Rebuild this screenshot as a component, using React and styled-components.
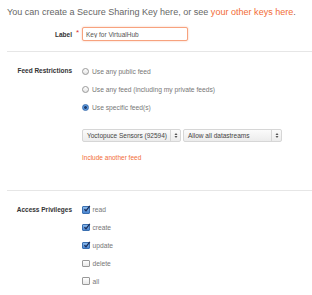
import React from "react";
import styled, { createGlobalStyle, css } from "styled-components";

const GlobalStyle = createGlobalStyle`
  body {
    margin: 0;
    background: #fff;
    font-family: "Liberation Sans", Arial, sans-serif;
    color: #555;
  }
`;

const feeds = [
  { text: "Use any public feed", checked: false },
  { text: "Use any feed (including my private feeds)", checked: false },
  { text: "Use specific feed(s)", checked: true },
];

const privileges = [
  { text: "read", checked: true },
  { text: "create", checked: true },
  { text: "update", checked: true },
  { text: "delete", checked: false },
  { text: "all", checked: false },
];

const App = () => (
  <Page>
    <GlobalStyle />
    <Intro>
      You can create a Secure Sharing Key here, or see{" "}
      <Link href="#">your other keys here</Link>.
    </Intro>

    <Row gapTop="3px">
      <FieldLabel>
        Label<Required>*</Required>
      </FieldLabel>
      <Controls>
        <TextInput defaultValue="Key for VirtualHub" />
      </Controls>
    </Row>

    <Divider />

    <Section pad="10px 0 0">
      <Row align="start">
        <FieldLabel top>Feed Restrictions</FieldLabel>
        <Controls>
          {feeds.map((f) => (
            <Option key={f.text}>
              <Radio checked={f.checked} />
              {f.text}
            </Option>
          ))}
          <SelectRow>
            <Select>
              Yoctopuce Sensors (92594)
              <Arrows />
            </Select>
            <Select>
              Allow all datastreams
              <Arrows />
            </Select>
          </SelectRow>
          <AddLink href="#">Include another feed</AddLink>
        </Controls>
      </Row>
    </Section>

    <Divider spaced />

    <Section pad="10px 0 0">
      <Row align="start">
        <FieldLabel top>Access Privileges</FieldLabel>
        <Controls>
          {privileges.map((p) => (
            <Option key={p.text} tight>
              <Checkbox checked={p.checked}>
                {p.checked && (
                  <svg width="8" height="8" viewBox="0 0 8 8">
                    <path
                      d="M1.4 4.2 L3 5.8 L6.8 0.8"
                      fill="none"
                      stroke="#1b2f5a"
                      strokeWidth="1.3"
                    />
                  </svg>
                )}
              </Checkbox>
              {p.text}
            </Option>
          ))}
        </Controls>
      </Row>
    </Section>
  </Page>
);

const Arrows = () => (
  <ArrowBox>
    <svg width="4" height="7" viewBox="0 0 4 7">
      <path d="M0.5 3 L2 1 L3.5 3 Z M0.5 4 L2 6 L3.5 4 Z" fill="#555" />
    </svg>
  </ArrowBox>
);

const Page = styled.div`
  width: 312px;
  height: 295px;
  overflow: hidden;
  padding-left: 7px;
  box-sizing: border-box;
`;

const Intro = styled.p`
  margin: 0;
  height: 24px;
  line-height: 24px;
  font-size: 9.05px;
  color: #666;
  white-space: nowrap;
`;

const Link = styled.a`
  color: #f26c35;
  text-decoration: none;
`;

const Row = styled.div`
  display: grid;
  grid-template-columns: 65px 1fr;
  column-gap: 10px;
  align-items: ${({ align }) => align || "center"};
  margin-top: ${({ gapTop }) => gapTop || "0"};
`;

const Section = styled.div`
  padding: ${({ pad }) => pad};
`;

const FieldLabel = styled.label`
  text-align: right;
  font-size: 6.5px;
  font-weight: bold;
  color: #333;
  position: relative;
  ${({ top }) =>
    top &&
    css`
      line-height: 18px;
    `}
`;

const Required = styled.span`
  position: absolute;
  right: -7px;
  top: -3px;
  color: #d33;
  font-size: 8px;
  font-weight: normal;
`;

const Controls = styled.div`
  display: flex;
  flex-direction: column;
  align-items: flex-start;
`;

const TextInput = styled.input`
  width: 106px;
  height: 14px;
  box-sizing: border-box;
  border: 1px solid #f7a27e;
  border-radius: 2px;
  box-shadow: 0 0 2px rgba(242, 108, 53, 0.45);
  padding: 0 3px;
  font-family: inherit;
  font-size: 6.5px;
  color: #555;
  outline: none;
`;

const Divider = styled.hr`
  margin: ${({ spaced }) => (spaced ? "25px 0 0" : "10px 0 0")};
  border: 0;
  border-top: 1px solid #e6e6e6;
`;

const Option = styled.div`
  display: flex;
  align-items: center;
  gap: 3px;
  height: ${({ tight }) => (tight ? "17.8px" : "18px")};
  font-size: 6.7px;
  color: #777;
`;

const Radio = styled.span`
  width: 5px;
  height: 5px;
  border-radius: 50%;
  border: 0.5px solid #999;
  background: linear-gradient(#fff, #e4e4e4);
  ${({ checked }) =>
    checked &&
    css`
      border-color: #3a6fb0;
      background: radial-gradient(circle, #1e3d6e 0 1.2px, #5d9be0 1.6px);
    `}
`;

const Checkbox = styled.span`
  width: 5.5px;
  height: 5.5px;
  border-radius: 1px;
  border: 0.5px solid #999;
  background: linear-gradient(#fff, #e8e8e8);
  position: relative;
  svg {
    position: absolute;
    left: -0.5px;
    top: -2px;
  }
  ${({ checked }) =>
    checked &&
    css`
      border-color: #3a6fb0;
      background: linear-gradient(#8cbbec, #4a86d2);
    `}
`;

const SelectRow = styled.div`
  display: flex;
  gap: 2px;
  margin-top: 13px;
`;

const Select = styled.div`
  width: 99px;
  height: 13px;
  box-sizing: border-box;
  border: 1px solid #d6d6d6;
  border-radius: 2px;
  background: linear-gradient(#fbfbfb, #ececec);
  display: flex;
  align-items: center;
  padding-left: 4px;
  font-size: 6.5px;
  color: #444;
`;

const ArrowBox = styled.span`
  margin-left: auto;
  width: 9px;
  height: 100%;
  border-left: 1px solid #d6d6d6;
  display: flex;
  align-items: center;
  justify-content: center;
`;

const AddLink = styled.a`
  margin-top: 9px;
  line-height: 14px;
  font-size: 6.5px;
  color: #f26c35;
  text-decoration: none;
`;

export default App;
